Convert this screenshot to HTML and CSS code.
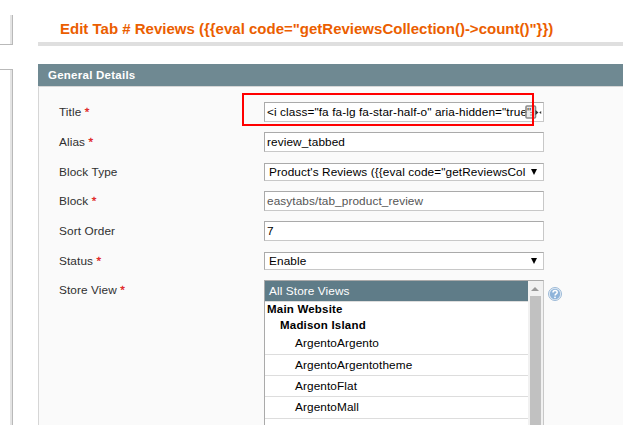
FILE: index.html
```html
<!DOCTYPE html>
<html lang="en">
<head>
<meta charset="utf-8">
<title>Edit Tab</title>
<link rel="stylesheet" href="styles.css">
</head>
<body>
<div class="page">
  <aside class="side">
    <div class="side-box side-box-top"></div>
    <div class="side-box side-box-main"></div>
  </aside>
  <main class="content">
    <h1 class="heading"><span>Edit Tab # Reviews ({{eval code="getReviewsCollection()-&gt;count()"}})</span></h1>
    <h2 class="panel-head">General Details</h2>
    <div class="panel">
      <div class="row row-title"><label>Title <em>*</em></label>
        <div class="field">&lt;i class="fa fa-lg fa-star-half-o" aria-hidden="true"
          <svg class="autofill" width="18" height="14" viewBox="0 0 18 14"><rect x="1" y="1" width="9.5" height="12" rx="1" fill="#bbb" fill-opacity=".3" stroke="#8c8c8c" stroke-width="1.6"/><path d="M5 7.5h3.5M5 10h3.5" stroke="#999"/><path d="M10.5 5l3 2.5-3 2.5z" fill="#333"/><path d="M14.2 7.5l2-1.6v3.2z" fill="#333"/></svg>
        </div>
        <div class="highlight"></div>
      </div>
      <div class="row row-alias"><label>Alias <em>*</em></label><div class="field">review_tabbed</div></div>
      <div class="row row-type"><label>Block Type</label><div class="field select"><span>Product's Reviews ({{eval code="getReviewsCol</span><i class="arrow"></i></div></div>
      <div class="row row-block"><label>Block <em>*</em></label><div class="field muted">easytabs/tab_product_review</div></div>
      <div class="row row-sort"><label>Sort Order</label><div class="field">7</div></div>
      <div class="row row-status"><label>Status <em>*</em></label><div class="field select"><span>Enable</span><i class="arrow"></i></div></div>
      <div class="row row-store"><label>Store View <em>*</em></label>
        <div class="list">
          <div class="options">
            <div class="option all">All Store Views</div>
            <div class="group site">Main Website</div>
            <div class="group store">Madison Island</div>
            <div class="option first">ArgentoArgento</div>
            <div class="option">ArgentoArgentotheme</div>
            <div class="option">ArgentoFlat</div>
            <div class="option last">ArgentoMall</div>
          </div>
          <div class="scrollbar"><i class="up"></i><div class="thumb"></div></div>
        </div>
        <svg class="help" width="16" height="16" viewBox="0 0 16 16"><circle cx="8" cy="8" r="6.5" fill="#e6eef6" stroke="#9dbad7" stroke-width="1"/><circle cx="8" cy="8" r="5.2" fill="#8fb4da"/><path d="M6 6.5c0-2.8 4.2-2.6 4.2-.2 0 1.6-2.1 1.5-2.1 3.1" fill="none" stroke="#fff" stroke-width="1.5"/><circle cx="8" cy="11.3" r=".9" fill="#fff"/></svg>
      </div>
    </div>
  </main>
</div>
</body>
</html>
```
FILE: styles.css
```css
* { box-sizing: border-box; }
body { margin: 0; background: #fff; font: 11.8px/16px "Liberation Sans", Arial, sans-serif; letter-spacing: .1px; color: #2f2f2f; overflow: hidden; }
.page { display: flex; height: 425px; overflow: hidden; }
.side { width: 13px; margin-right: 25px; flex: none; display: flex; flex-direction: column; gap: 24px; padding-top: 15px; }
.side-box { border-right: 1px solid #b9b9b9; box-shadow: inset -2px 0 #e4e4e4; }
.side-box-top { height: 30px; border-bottom: 1px solid #b9b9b9; }
.side-box-main { flex: 1; border-top: 1px solid #b9b9b9; }
.content { flex: 1; min-width: 0; }
.heading { margin: 0 0 18px; height: 46px; padding: 20px 0 0 22px; border-bottom: 4px solid #dfdfdf; font-size: 15px; line-height: 18px; letter-spacing: 0; color: #eb5e00; white-space: nowrap; }
.panel-head { margin: 0; height: 22px; padding-left: 10px; background: #6f8992; color: #fff; font-size: 11.5px; letter-spacing: .25px; line-height: 22px; }
.panel { height: 339px; background: #fafafa; border: solid #d6d6d6; border-width: 1px 0 0 1px; padding: 15px 0 0 20px; }
.row { position: relative; display: flex; align-items: flex-start; }
.row-title, .row-block { height: 30px; }
.row-alias { height: 31px; }
.row-type { height: 28px; }
.row-sort { height: 31px; }
.row-status { height: 28px; }
label { width: 205px; flex: none; line-height: 20px; }
.row-type label, .row-status label { line-height: 18px; }
em { color: #e0201c; font-style: normal; -webkit-text-stroke: .3px #e0201c; }
.field { position: relative; width: 280px; height: 20px; padding-left: 2px; border: 1px solid #c8c8c8; border-top-color: #aaa; border-left-color: #aaa; background: #fff; color: #000; line-height: 18px; white-space: nowrap; overflow: hidden; }
.muted { color: #555; }
.select { height: 18px; display: flex; justify-content: space-between; align-items: center; padding: 0 6px 0 4px; line-height: 16px; }
.arrow { border: solid transparent; border-width: 6px 3.5px 0; border-top-color: #000; }
.autofill { position: absolute; left: 260px; top: 2px; }
.highlight { position: absolute; left: 183px; top: -9px; width: 292px; height: 33px; border: 2px solid #f00; }
.list { width: 280px; height: 150px; display: flex; border: 1px solid #c8c8c8; border-top-color: #aaa; border-left-color: #aaa; background: #fff; color: #000; }
.options { flex: 1; }
.option { height: 21px; padding-left: 30px; line-height: 21px; border-bottom: 1px solid #ddd; }
.option.all { padding-left: 4px; line-height: 20px; background: #5f7c88; color: #fff; }
.option.first { line-height: 19px; }
.option.last { height: 22px; }
.group { height: 16px; line-height: 15px; font-weight: bold; font-size: 11.5px; letter-spacing: .2px; padding-left: 2px; }
.group.store { padding-left: 15px; }
.scrollbar { width: 15px; background: #f1f1f1; display: flex; flex-direction: column; align-items: center; padding: 6px 1px 0 0; }
.up { border: solid transparent; border-width: 0 4px 4px; border-bottom-color: #999; margin-bottom: 5px; }
.thumb { width: 11px; flex: 1; background: #c1c1c1; }
.help { margin: 6px 0 0 3px; }
```
